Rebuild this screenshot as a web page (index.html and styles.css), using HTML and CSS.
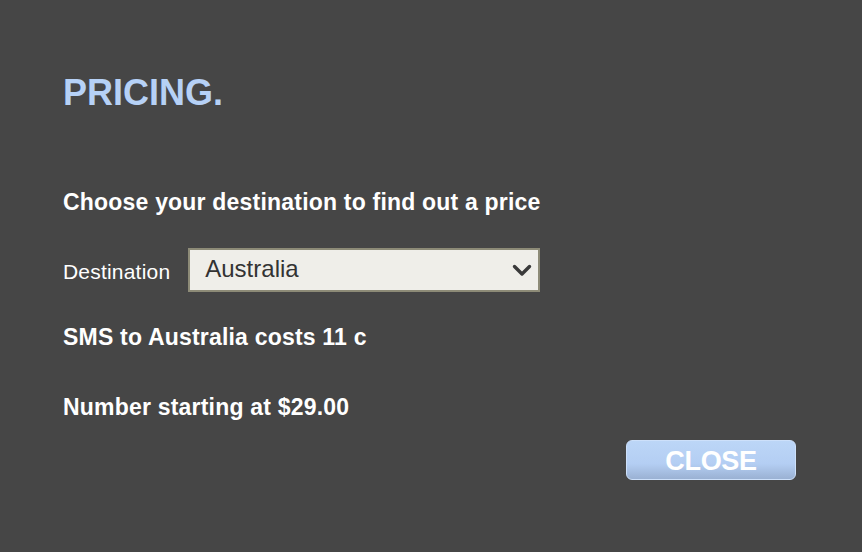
FILE: index.html
```html
<!DOCTYPE html>
<html>
<head>
<meta charset="utf-8">
<link rel="stylesheet" href="styles.css">
</head>
<body>
<div class="dialog">
  <h1 class="title">PRICING.</h1>
  <p class="lead">Choose your destination to find out a price</p>
  <div class="field">
    <label class="label">Destination</label>
    <div class="select">
      <span class="select-value">Australia</span>
      <svg class="chevron" width="20" height="13" viewBox="0 0 20 13"><path d="M2.5 2.5 L10 10 L17.5 2.5" fill="none" stroke="#3a3a3a" stroke-width="3.4" stroke-linecap="round" stroke-linejoin="round"/></svg>
    </div>
  </div>
  <p class="info sms">SMS to Australia costs 11 c</p>
  <p class="info number">Number starting at $29.00</p>
  <div class="actions">
    <button class="close">CLOSE</button>
  </div>
</div>
</body>
</html>
```
FILE: styles.css
```css
html, body {
  margin: 0;
  padding: 0;
  background: #464646;
}
body {
  width: 862px;
  height: 552px;
  overflow: hidden;
  font-family: "Liberation Sans", Arial, sans-serif;
  color: #ffffff;
}
.dialog {
  padding: 72px 66px 0 63px;
  display: flex;
  flex-direction: column;
}
.title {
  margin: 0;
  font-size: 36px;
  line-height: 42px;
  font-weight: bold;
  color: #b6d1f6;
}
.lead {
  margin: 75px 0 0 0;
  font-size: 23px;
  line-height: 26px;
  font-weight: bold;
  letter-spacing: 0.2px;
}
.field {
  margin-top: 33px;
  display: flex;
  align-items: flex-start;
  gap: 18px;
}
.label {
  margin-top: 12px;
  font-size: 21px;
  line-height: 24px;
  letter-spacing: 0.2px;
}
.select {
  width: 352px;
  height: 44px;
  box-sizing: border-box;
  border: 2px solid #8d8b77;
  background: #efeee9;
  display: flex;
  align-items: center;
  justify-content: space-between;
  padding: 0 6px 0 15px;
}
.select-value {
  color: #333333;
  font-size: 24px;
  line-height: 28px;
  margin-top: -2px;
}
.chevron {
  display: block;
  margin-top: 1px;
}
.info {
  margin: 0;
  font-size: 23px;
  line-height: 26px;
  font-weight: bold;
  letter-spacing: 0.2px;
}
.sms {
  margin-top: 32px;
}
.number {
  margin-top: 44px;
}
.actions {
  display: flex;
  justify-content: flex-end;
  margin-top: 20px;
}
.close {
  width: 170px;
  height: 40px;
  box-sizing: border-box;
  border: 1px solid #cde0fa;
  border-radius: 6px;
  background: linear-gradient(#bcd6f7 0%, #b4cef3 60%, #9ab1d3 100%);
  color: #ffffff;
  font-family: "Liberation Sans", Arial, sans-serif;
  font-weight: bold;
  font-size: 27px;
  line-height: 36px;
  padding: 1px 0 0 0;
  letter-spacing: -0.3px;
}
```
